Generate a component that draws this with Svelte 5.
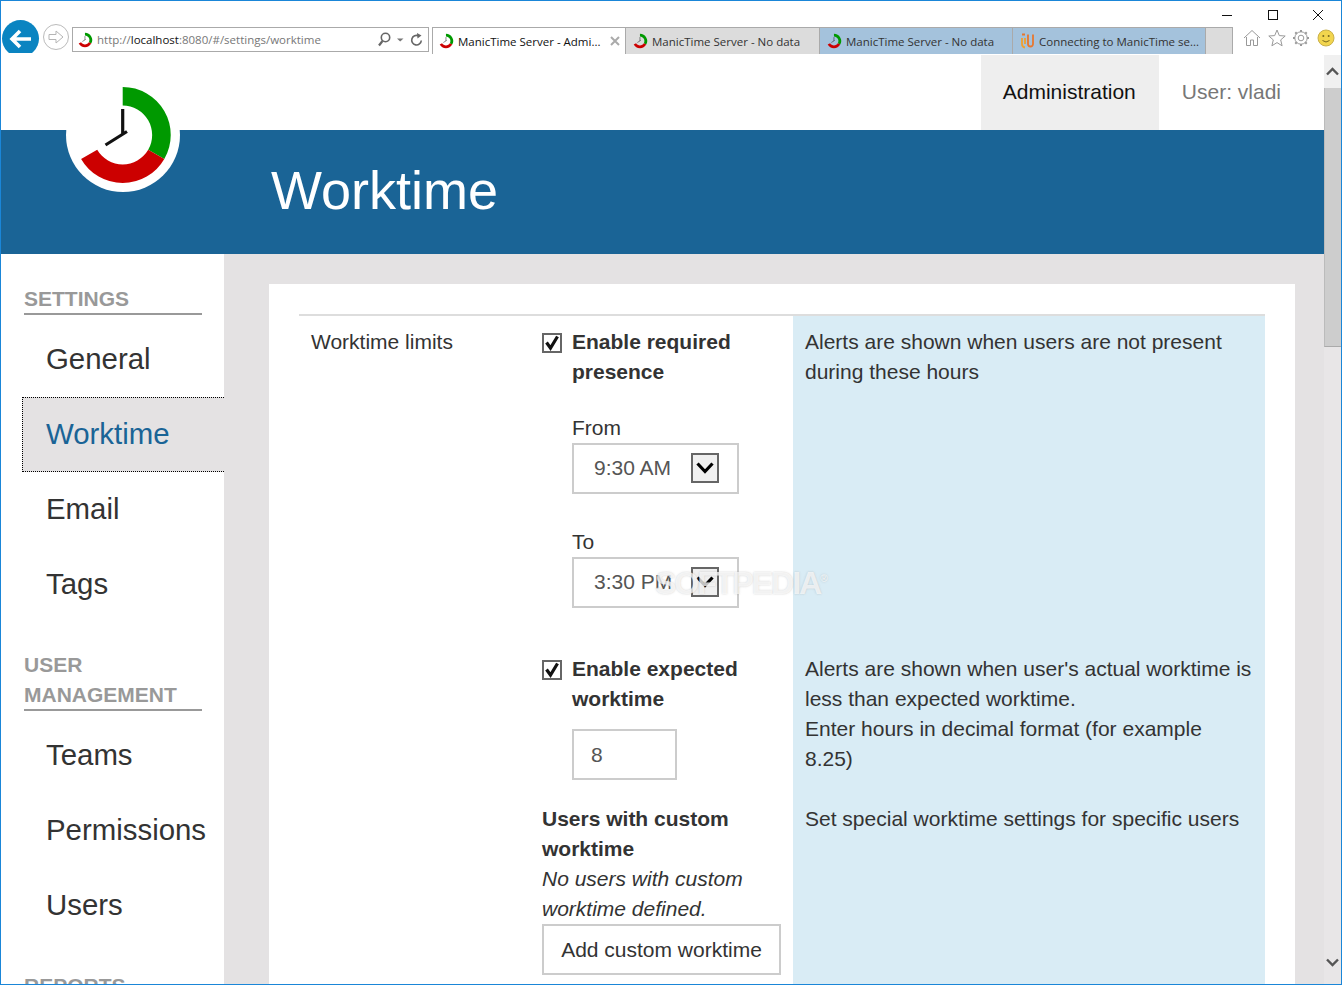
<script lang="ts">
  const tabs = [
    { title: "ManicTime Server - Admi...", kind: "active" },
    { title: "ManicTime Server - No data", kind: "idle" },
    { title: "ManicTime Server - No data", kind: "group" },
    { title: "Connecting to ManicTime se...", kind: "group", connecting: true },
  ];

  const menu = [
    { heading: ["SETTINGS"], items: ["General", "Worktime", "Email", "Tags"] },
    { heading: ["USER", "MANAGEMENT"], items: ["Teams", "Permissions", "Users"] },
    { heading: ["REPORTS"], items: [] },
  ];
</script>

{#snippet clock(size: number)}
  <svg class="clock" width={size} height={size} viewBox="70 82 106 106" aria-hidden="true">
    <path d="M122.7 87A48 48 0 0 1 164.3 159L148.2 149.75A29.5 29.5 0 0 0 122.7 105.5Z" fill="#009900" />
    <path d="M164.3 159A48 48 0 0 1 81.1 159L97.2 149.75A29.5 29.5 0 0 0 148.2 149.75Z" fill="#cc0000" />
    <path d="M122.7 109V134M127 131.5L105.5 145" stroke="#111" stroke-width="3.2" fill="none" />
  </svg>
{/snippet}

{#snippet chevron()}
  <svg width="18" height="12" viewBox="0 0 18 12" aria-hidden="true">
    <path d="M1.5 1.5L9 9.5L16.5 1.5" stroke="#000" stroke-width="3.2" fill="none" />
  </svg>
{/snippet}

{#snippet checkbox()}
  <span class="check">
    <svg width="16" height="16" viewBox="0 0 16 16" aria-hidden="true">
      <path d="M2.5 7.5L6.5 13L13.5 1.5" stroke="#111" stroke-width="3.2" fill="none" />
    </svg>
  </span>
{/snippet}

<div class="window">
  <header class="chrome">
    <div class="caption">
      <svg width="12" height="12" viewBox="0 0 12 12" class="cap-btn"><path d="M1 6.5H11" stroke="#111" /></svg>
      <svg width="12" height="12" viewBox="0 0 12 12" class="cap-btn"><rect x="1.5" y="1.5" width="9" height="9" fill="none" stroke="#111" /></svg>
      <svg width="12" height="12" viewBox="0 0 12 12" class="cap-btn"><path d="M1 1L11 11M11 1L1 11" stroke="#111" /></svg>
    </div>
    <div class="toolbar">
      <div class="history">
        <span class="back">
          <svg width="24" height="20" viewBox="0 0 24 20" aria-hidden="true">
            <path d="M11 2L3 10L11 18M3 10H22" stroke="#fff" stroke-width="3.6" fill="none" />
          </svg>
        </span>
        <span class="forward">
          <svg width="16" height="14" viewBox="0 0 16 14" aria-hidden="true">
            <path d="M1 4.5H8V1L15 7L8 13V9.5H1Z" stroke="#b5b5b5" fill="none" />
          </svg>
        </span>
      </div>
      <div class="address">
        {@render clock(16)}
        <span class="url">http://<b>localhost</b>:8080/#/settings/worktime</span>
        <svg class="addr-tools" width="47" height="16" viewBox="0 0 47 16" aria-hidden="true">
          <circle cx="7.5" cy="5.5" r="4.2" stroke="#666" stroke-width="1.6" fill="none" />
          <path d="M4.5 9L1 13.5" stroke="#666" stroke-width="2.2" />
          <path d="M19 6.5H25.5L22.2 9.5Z" fill="#777" />
          <path d="M43.3 8.5A4.8 4.8 0 1 1 40.5 3.8" stroke="#666" stroke-width="1.6" fill="none" />
          <path d="M39 1L43.5 3.5L39.5 6.5Z" fill="#666" />
        </svg>
      </div>
      <div class="tabs">
        {#each tabs as tab}
          <div class="tab {tab.kind}">
            {#if tab.connecting}
              <svg class="tab-icon" width="14" height="16" viewBox="0 0 14 16" aria-hidden="true">
                <path d="M8 1.5V11A2.5 2.5 0 0 0 13 11V1.5" stroke="#e8772e" stroke-width="1.8" fill="none" />
                <path d="M2 5V11A3.5 3.5 0 0 0 5 14.5M5 5V11" stroke="#f0a030" stroke-width="1.8" fill="none" />
                <path d="M2 1.5H5" stroke="#e8772e" stroke-width="2" />
              </svg>
            {:else}
              {@render clock(16)}
            {/if}
            <span class="tab-title">{tab.title}</span>
            {#if tab.kind === "active"}
              <svg class="tab-close" width="10" height="10" viewBox="0 0 10 10" aria-hidden="true">
                <path d="M1 1L9 9M9 1L1 9" stroke="#aaa" stroke-width="2" />
              </svg>
            {/if}
          </div>
        {/each}
        <div class="tab idle new-tab"></div>
      </div>
      <div class="tools">
        <svg width="18" height="18" viewBox="0 0 18 18" aria-hidden="true">
          <path d="M1 9L9 1.5L17 9M3.5 8V16.5H7.5V11H10.5V16.5H14.5V8" stroke="#999" fill="none" />
        </svg>
        <svg width="18" height="18" viewBox="0 0 18 18" aria-hidden="true">
          <path d="M9 1L11.3 6.6L17.2 7L12.7 10.9L14.1 16.8L9 13.6L3.9 16.8L5.3 10.9L0.8 7L6.7 6.6Z" stroke="#999" fill="none" />
        </svg>
        <svg width="18" height="18" viewBox="0 0 18 18" aria-hidden="true">
          <circle cx="9" cy="9" r="2.8" stroke="#999" fill="none" />
          <circle cx="9" cy="9" r="6.2" stroke="#999" fill="none" />
          <path d="M9 1V3M9 15V17M1 9H3M15 9H17M3.3 3.3L4.7 4.7M13.3 13.3L14.7 14.7M3.3 14.7L4.7 13.3M13.3 4.7L14.7 3.3" stroke="#999" stroke-width="2" />
        </svg>
        <svg width="18" height="18" viewBox="0 0 18 18" aria-hidden="true">
          <circle cx="9" cy="9" r="8" fill="#f2d54e" stroke="#c9b04a" />
          <circle cx="6.3" cy="7" r="1" fill="#7a6a20" />
          <circle cx="11.7" cy="7" r="1" fill="#7a6a20" />
          <path d="M5.5 11.5Q9 14.5 12.5 11.5" stroke="#7a6a20" fill="none" />
        </svg>
      </div>
    </div>
  </header>

  <div class="viewport">
    <div class="page">
      <div class="topbar">
        <a class="top-link current">Administration</a>
        <a class="top-link">User: vladi</a>
      </div>
      <div class="banner">
        <span class="logo">{@render clock(106)}</span>
        <h1>Worktime</h1>
      </div>
      <div class="columns">
        <nav class="sidebar">
          {#each menu as group}
            <h2>
              {#each group.heading as line}
                <span>{line}</span>
              {/each}
            </h2>
            <ul>
              {#each group.items as item}
                <li class:selected={item === "Worktime"}>{item}</li>
              {/each}
            </ul>
          {/each}
        </nav>
        <main class="main">
          <section class="card">
            <div class="form">
              <div class="label">Worktime limits</div>
              <div class="fields first">
                <div class="check-row">
                  {@render checkbox()}
                  <strong>Enable required presence</strong>
                </div>
                <div class="field from">
                  <span>From</span>
                  <div class="select"><span>9:30 AM</span> <i class="arrow">{@render chevron()}</i></div>
                </div>
                <div class="field to">
                  <span>To</span>
                  <div class="select"><span>3:30 PM</span> <i class="arrow">{@render chevron()}</i></div>
                </div>
              </div>
              <div class="help">
                Alerts are shown when users are not present during these hours
              </div>

              <div class="label"></div>
              <div class="fields second">
                <div class="check-row">
                  {@render checkbox()}
                  <strong>Enable expected worktime</strong>
                </div>
                <div class="hours">8</div>
              </div>
              <div class="help">
                Alerts are shown when user's actual worktime is less than expected worktime.<br />
                Enter hours in decimal format (for example 8.25)
              </div>

              <div class="label"></div>
              <div class="fields third">
                <strong>Users with custom worktime</strong>
                <em>No users with custom worktime defined.</em>
                <button type="button">Add custom worktime</button>
              </div>
              <div class="help">Set special worktime settings for specific users</div>
            </div>
          </section>
        </main>
      </div>
      <span class="watermark">SOFTPEDIA<sup>®</sup></span>
    </div>
    <div class="scrollbar">
      <span class="scroll-btn">
        <svg width="13" height="9" viewBox="0 0 13 9" aria-hidden="true"><path d="M1 7.5L6.5 2L12 7.5" stroke="#555" stroke-width="2.4" fill="none" /></svg>
      </span>
      <span class="thumb"></span>
      <span class="track"></span>
      <span class="scroll-btn down">
        <svg width="13" height="9" viewBox="0 0 13 9" aria-hidden="true"><path d="M1 1.5L6.5 7L12 1.5" stroke="#555" stroke-width="2.4" fill="none" /></svg>
      </span>
    </div>
  </div>
</div>

<style>
  :global(body) {
    margin: 0;
    background: #fff;
  }
  .window {
    box-sizing: border-box;
    height: 985px;
    border: 1px solid #1a86d8;
    display: flex;
    flex-direction: column;
    overflow: hidden;
    font-family: "Liberation Sans", Arial, sans-serif;
    color: #333;
  }

  /* browser chrome */
  .chrome {
    height: 53px;
    flex: none;
    font-family: "Open Sans", "Noto Sans", sans-serif;
  }
  .caption {
    height: 26px;
    display: flex;
    justify-content: flex-end;
    align-items: flex-start;
    padding: 8px 17px 0 0;
    box-sizing: border-box;
    gap: 33.5px;
  }
  .toolbar {
    height: 27px;
    display: flex;
    align-items: stretch;
  }
  .history {
    width: 71px;
    flex: none;
    display: flex;
    gap: 4px;
    padding-left: 1px;
    box-sizing: border-box;
    margin-top: -7px;
    height: 33px;
    overflow: hidden;
  }
  .back {
    width: 37px;
    height: 37px;
    flex: none;
    border-radius: 50%;
    background: #0a84c1;
    display: grid;
    place-items: center;
  }
  .forward {
    width: 24px;
    height: 24px;
    flex: none;
    margin-top: 4px;
    border: 1px solid #bbb;
    border-radius: 50%;
    display: grid;
    place-items: center;
  }
  .address {
    width: 357px;
    flex: none;
    box-sizing: border-box;
    height: 25px;
    border: 1px solid #aaa;
    display: flex;
    align-items: center;
    padding: 0 3px 0 4px;
    gap: 4px;
    font-size: 11.5px;
    color: #777;
  }
  .address b {
    font-weight: 400;
    color: #111;
  }
  .url {
    flex: 1;
    white-space: nowrap;
  }
  .tabs {
    margin-left: 3px;
    display: flex;
    width: 801px;
    flex: none;
  }
  .tab {
    width: 194px;
    flex: none;
    box-sizing: border-box;
    border-top: 1px solid #aaa;
    border-right: 1px solid #aaa;
    display: flex;
    align-items: center;
    gap: 4px;
    padding-left: 6px;
    font-size: 11.5px;
    color: #333;
    white-space: nowrap;
  }
  .tab.active {
    border-left: 1px solid #aaa;
    background: #fff;
    color: #111;
    padding-left: 5px;
  }
  .tab.idle {
    background: #dcdcdc;
  }
  .tab.group {
    width: 193px;
    background: #a4c2dc;
  }
  .tab-icon {
    width: 16px;
  }
  .tab-title {
    flex: 1;
  }
  .tab-close {
    margin-right: 5px;
  }
  .tab.new-tab {
    width: 27px;
  }
  .tools {
    flex: 1;
    display: flex;
    gap: 6.5px;
    padding: 2px 0 0 10px;
  }

  /* page */
  .viewport {
    flex: 1;
    min-height: 0;
    display: flex;
    margin-top: 1px;
  }
  .page {
    flex: 1;
    min-width: 0;
    position: relative;
    overflow: hidden;
  }
  .topbar {
    height: 75px;
    display: flex;
    justify-content: flex-end;
    padding-right: 21px;
  }
  .top-link {
    display: flex;
    align-items: center;
    padding: 0 22px 1px 23px;
    font-size: 21px;
    color: #777;
  }
  .top-link.current {
    background: #eee;
    color: #111;
    padding: 0 23px 1px 22px;
  }
  .banner {
    height: 124px;
    background: #1a6496;
    position: relative;
    display: flex;
    align-items: center;
    padding: 0 0 4px 270px;
    box-sizing: border-box;
  }
  .banner h1 {
    margin: 0;
    font-size: 54px;
    font-weight: 400;
    color: #fff;
  }
  .logo {
    position: absolute;
    left: 65px;
    top: -52px;
    width: 114px;
    height: 114px;
    border-radius: 50%;
    background: #fff;
    display: grid;
    place-items: center;
  }
  .clock {
    flex: none;
    display: block;
  }
  .columns {
    display: flex;
  }
  .sidebar {
    width: 223px;
    flex: none;
    box-sizing: border-box;
    padding-top: 30px;
    background: #fff;
  }
  .sidebar h2 {
    margin: 0 0 7px 23px;
    width: 178px;
    border-bottom: 2px solid #999;
    font-size: 21px;
    line-height: 30px;
    font-weight: 700;
    color: #999;
  }
  .sidebar h2 span {
    display: block;
  }
  .sidebar h2 span:last-child {
    margin-bottom: -1px;
  }
  .sidebar ul {
    list-style: none;
    margin: 0 0 28px 21px;
    padding: 0;
  }
  .sidebar li {
    height: 75px;
    box-sizing: border-box;
    display: flex;
    align-items: center;
    padding: 0 0 2px 23px;
    font-size: 29.4px;
    border: 1px solid transparent;
    border-right: 0;
  }
  .sidebar li.selected {
    background: #e4e2e3;
    color: #1a6496;
    border: 1px dotted #000;
    border-right: 0;
  }
  .main {
    flex: 1;
    background: #e4e2e3;
    padding: 30px 29px 0 45px;
    min-height: 800px;
  }
  .card {
    background: #fff;
    padding: 30px 30px 0;
  }
  .form {
    display: grid;
    grid-template-columns: 231px 263px 1fr;
    border-top: 2px solid #ddd;
    font-size: 21px;
    line-height: 30px;
  }
  .label {
    padding: 11px 12px;
  }
  .fields {
    display: flex;
    flex-direction: column;
    align-items: flex-start;
    padding: 11px 12px 0;
  }
  .fields strong {
    font-weight: 700;
  }
  .help {
    background: #d9ecf5;
    padding: 11px 12px;
  }
  .check-row {
    display: flex;
    align-items: flex-start;
    gap: 10px;
  }
  .check {
    width: 16px;
    height: 16px;
    flex: none;
    border: 2px solid #666;
    margin-top: 6px;
    background: #fff;
    display: block;
  }
  .check svg {
    display: block;
  }
  .field {
    margin-left: 30px;
    display: flex;
    flex-direction: column;
  }
  .field.from {
    margin-top: 26px;
  }
  .field.to {
    margin-top: 33px;
  }
  .fields.first {
    padding-bottom: 35px;
  }
  .select {
    width: 167px;
    height: 51px;
    box-sizing: border-box;
    border: 2px solid #ccc;
    display: flex;
    align-items: center;
    justify-content: space-between;
    padding: 0 18px 2px 20px;
    color: #555;
  }
  .arrow {
    width: 28px;
    height: 30px;
    box-sizing: border-box;
    border: 2px solid #666;
    background: #f0f0f0;
    display: grid;
    place-items: center;
  }
  .hours {
    margin: 15px 0 13px 30px;
    width: 105px;
    height: 51px;
    box-sizing: border-box;
    border: 2px solid #ccc;
    padding: 9px 0 0 17px;
    color: #555;
  }
  .fields.third {
    padding-bottom: 10px;
  }
  .fields em {
    font-style: italic;
  }
  button {
    width: 239px;
    height: 51px;
    border: 2px solid #ccc;
    background: #fff;
    font: inherit;
    color: #333;
    padding: 0;
  }
  .watermark {
    position: absolute;
    left: 654px;
    top: 506px;
    font-size: 32px;
    font-weight: 700;
    line-height: 36px;
    color: rgba(255, 255, 255, 0.72);
    text-shadow: 0 0 2px rgba(120, 120, 120, 0.35);
    letter-spacing: -2px;
  }
  .watermark sup {
    font-size: 10px;
  }

  /* scrollbar */
  .scrollbar {
    width: 17px;
    flex: none;
    display: flex;
    flex-direction: column;
    background: #e8e6e7;
  }
  .scroll-btn {
    height: 33px;
    flex: none;
    background: #f0f0f0;
    display: grid;
    place-items: center;
  }
  .scroll-btn.down {
    height: 30px;
    background: #e8e6e7;
    padding-bottom: 14px;
    box-sizing: border-box;
  }
  .thumb {
    height: 259px;
    flex: none;
    box-sizing: border-box;
    background: #cdcdcd;
    border-left: 1px solid #bbb;
    border-bottom: 1px solid #aaa;
  }
  .track {
    flex: 1;
  }
</style>
